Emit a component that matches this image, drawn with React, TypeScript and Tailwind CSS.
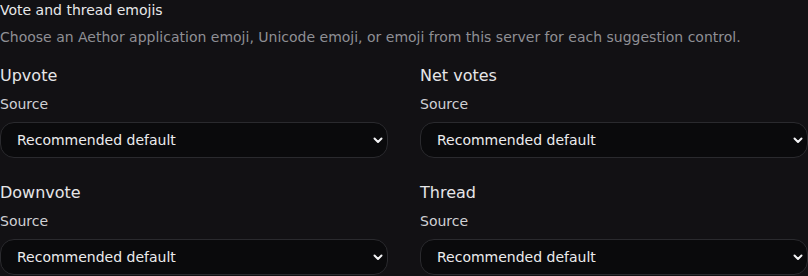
import React from "react";

const font = { fontFamily: '"DejaVu Sans", "Liberation Sans", sans-serif' };

function Field({ label }: { label: string }) {
  return (
    <div className="flex flex-col">
      <div className="text-[16px] leading-[24px] text-[#e6e6e8]">{label}</div>
      <div className="mt-[6px] text-[14px] leading-[20px] text-[#d0d0d4]">Source</div>
      <div className="mt-[8px] relative h-[36px] rounded-[14px] border border-[#2a2a2e] bg-[#0a0a0c] flex items-center pl-4 pr-[4px]">
        <span className="text-[14px] leading-[20px] text-[#ececee] flex-1">Recommended default</span>
        <svg width="10" height="7" viewBox="0 0 10 7">
          <path d="M1.5 1.5 L5 5 L8.5 1.5" fill="none" stroke="#f4f4f6" strokeWidth="2" strokeLinecap="round" strokeLinejoin="round" />
        </svg>
      </div>
    </div>
  );
}

export default function App() {
  return (
    <div className="w-[808px] h-[276px] overflow-hidden bg-[#121114]" style={font}>
      <div className="text-[14px] leading-[20px] text-[#e8e8ea]">Vote and thread emojis</div>
      <div className="mt-[7px] text-[14px] leading-[20px] text-[#8f8f94] whitespace-nowrap">
        Choose an Aethor application emoji, Unicode emoji, or emoji from this server for each suggestion control.
      </div>
      <div className="mt-[17px] grid grid-cols-2 gap-x-8 gap-y-[23px]">
        <Field label="Upvote" />
        <Field label="Net votes" />
        <Field label="Downvote" />
        <Field label="Thread" />
      </div>
    </div>
  );
}
